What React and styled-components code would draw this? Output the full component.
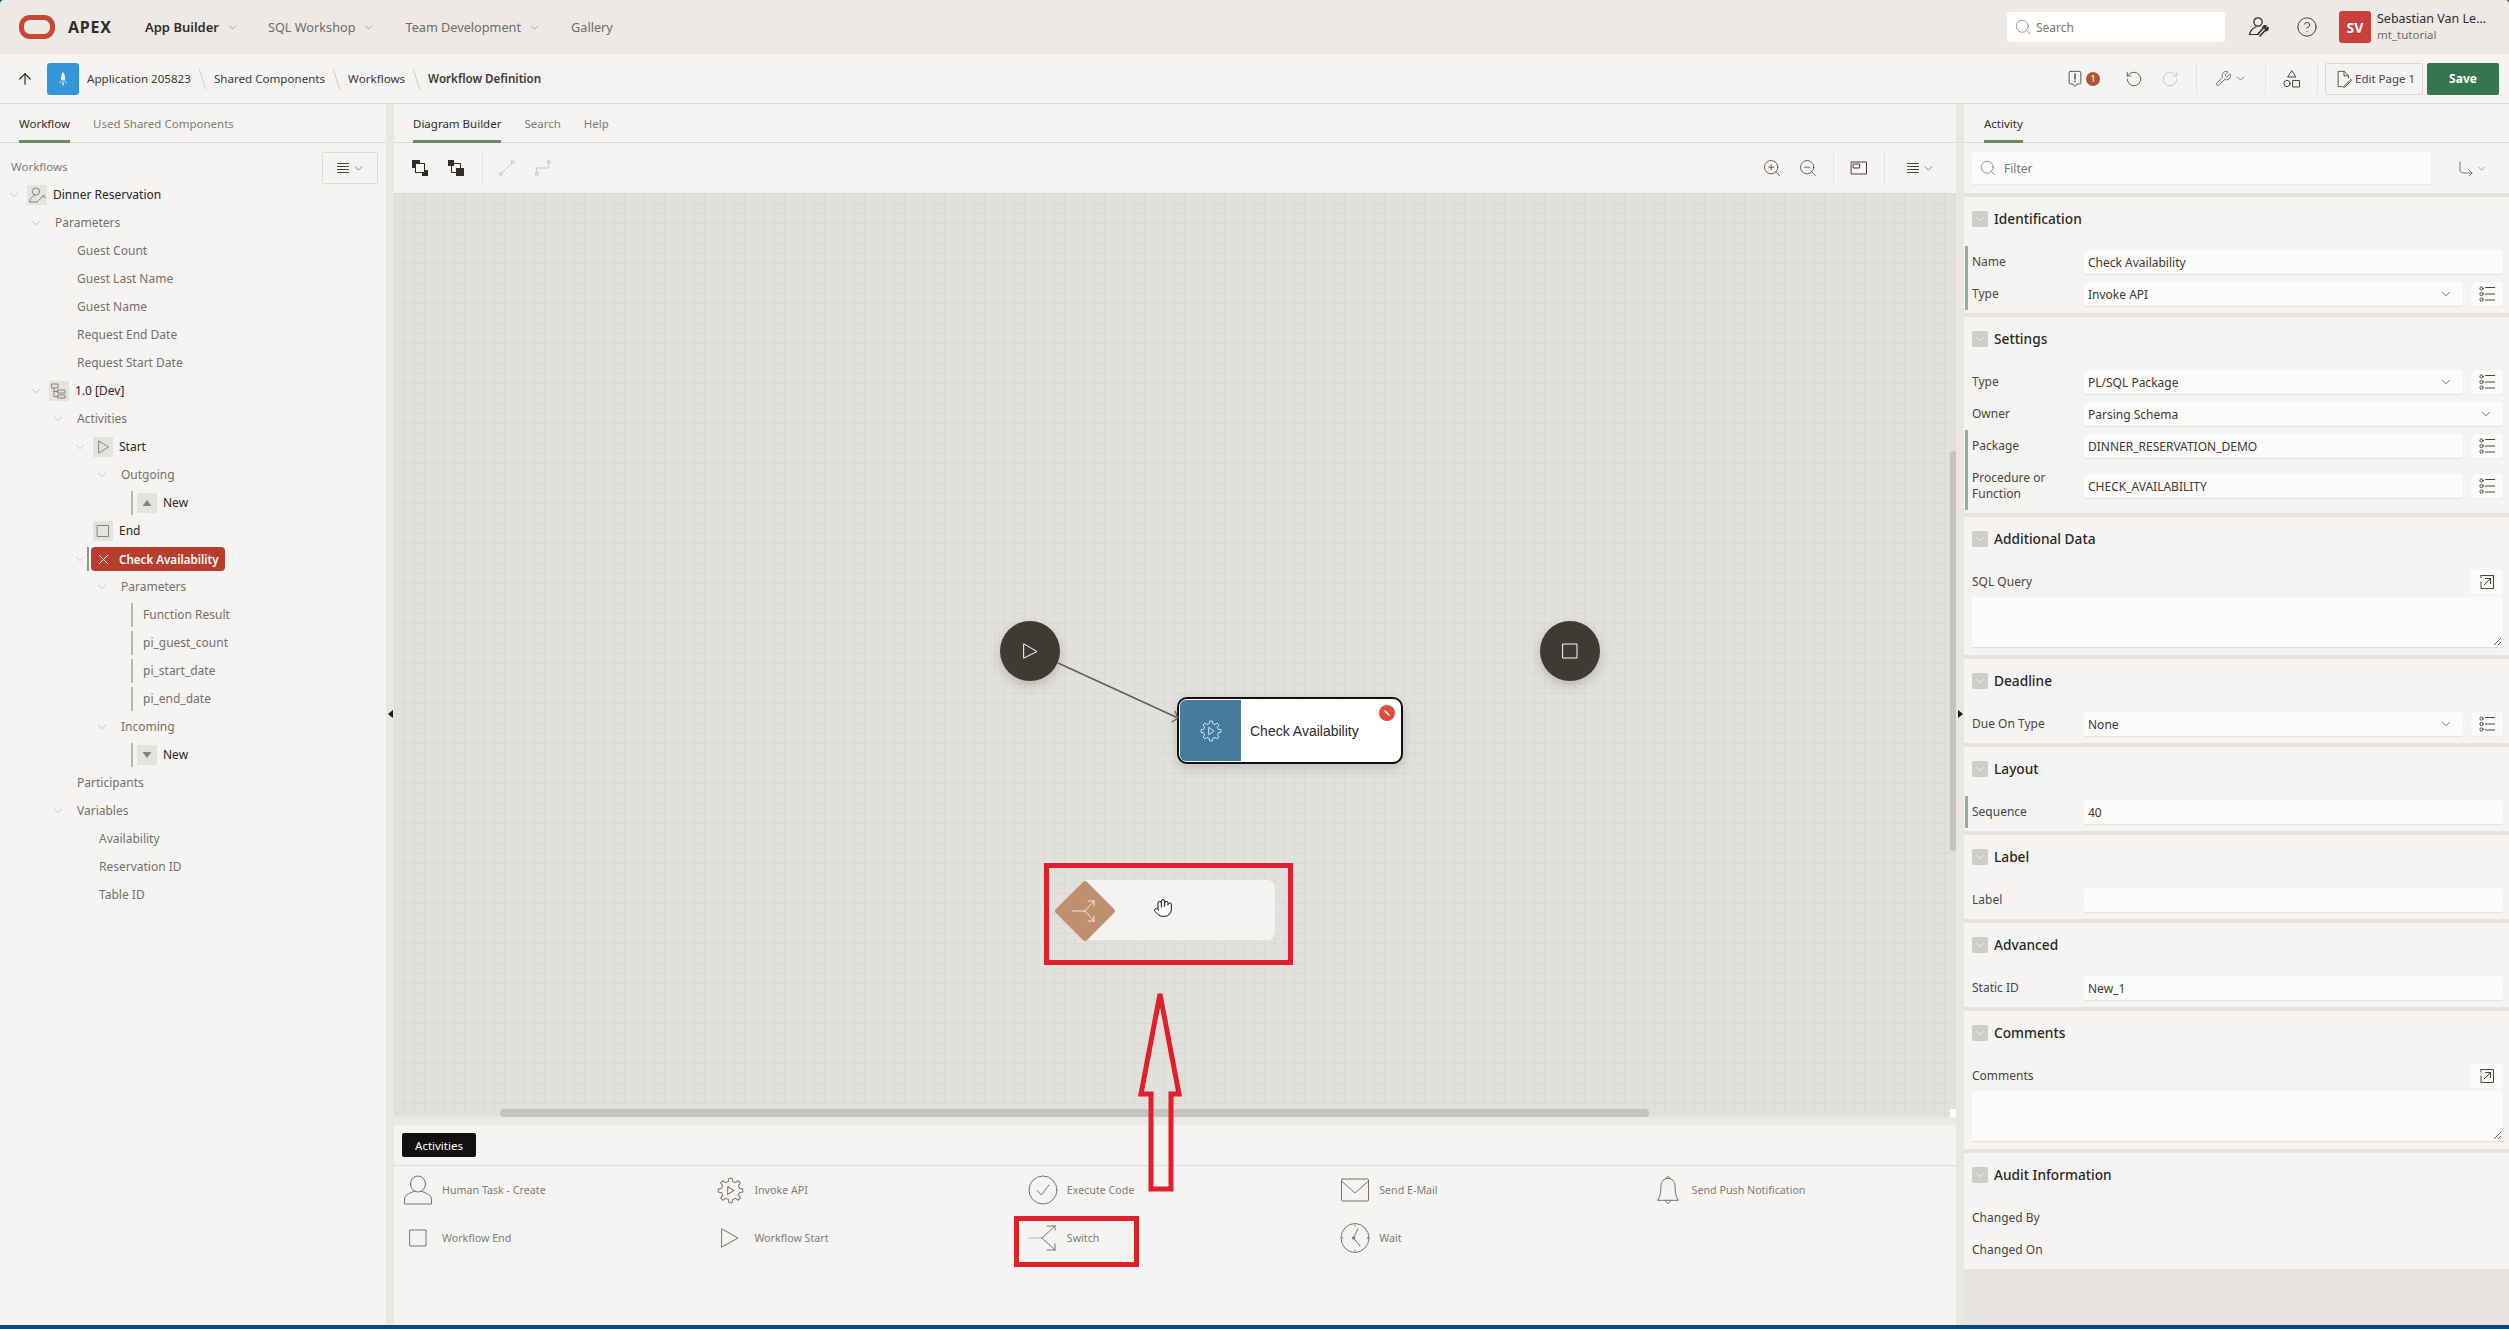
import React from "react";
import styled, { createGlobalStyle } from "styled-components";
import { ChevronDown, Search as SearchGlyph, CircleHelp, RotateCcw, RotateCw, Wrench, ZoomIn, ZoomOut, ArrowUp, X, Hand } from "lucide-react";

const Global = createGlobalStyle`
  html, body { margin: 0; padding: 0; background: #0c4a75; }
  body { font-family: "Noto Sans", "Open Sans", sans-serif; font-size: 12px; color: #312d2a; overflow: hidden; }
  * { box-sizing: border-box; }
`;

const Page = styled.div`
  position: relative;
  width: 2509px;
  height: 1329px;
  display: flex;
  flex-direction: column;
  background: #0c4a75;
  overflow: hidden;
`;
const TopBar = styled.header`
  height: 54px;
  display: flex;
  align-items: center;
  background: #ece9e6;
  border-radius: 4px 4px 0 0;
  padding-left: 19px;
  padding-right: 10px;
`;
const Logo = styled.div`
  width: 36px;
  height: 24px;
  border: 5px solid #c74634;
  border-radius: 11px;
`;
const Brand = styled.div`
  font-size: 16px;
  font-weight: 700;
  letter-spacing: 0.8px;
  margin-left: 13px;
  margin-right: 32px;
  width: 45px;
`;
const NavItem = styled.div`
  display: flex;
  align-items: center;
  gap: 7px;
  font-size: ${p => (p.$active ? 13 : 12.7)}px;
  font-weight: ${p => (p.$active ? 600 : 400)};
  color: ${p => (p.$active ? "#312d2a" : "#6f6b67")};
  margin-right: ${p => (p.$active ? 29 : 30)}px;
  svg { color: #8d8985; }
`;
const Spacer = styled.div`flex: 1;`;
const GlobalSearch = styled.div`
  width: 218px;
  height: 30px;
  background: #fff;
  border-radius: 3px;
  display: flex;
  align-items: center;
  gap: 4px;
  padding-left: 7px;
  color: #7a7672;
  font-size: 12px;
  margin-right: 22px;
`;
const TopIcon = styled.div`
  width: 24px;
  height: 24px;
  display: flex;
  align-items: center;
  justify-content: center;
  color: #312d2a;
  margin-right: ${p => p.$mr || 0}px;
`;
const Avatar = styled.div`
  width: 32px;
  height: 32px;
  background: #c9403a;
  color: #fff;
  font-weight: 700;
  font-size: 14px;
  border-radius: 3px;
  display: flex;
  align-items: center;
  justify-content: center;
  margin-right: 6px;
`;
const UserBlock = styled.div`
  display: flex;
  flex-direction: column;
  line-height: 16px;
  font-size: 12.5px;
  white-space: nowrap;
  width: 122px;
  span:last-child { color: #6f6b67; font-size: 11.5px; }
`;

const ToolBar = styled.div`
  height: 50px;
  display: flex;
  align-items: center;
  background: #f6f4f2;
  border-bottom: 1px solid #e0ddd9;
  padding: 0 10px 0 16px;
`;
const UpButton = styled.div`
  width: 18px;
  display: flex;
  margin-right: 13px;
  color: #312d2a;
`;
const AppIcon = styled.div`
  width: 32px;
  height: 32px;
  background: #3498d8;
  border-radius: 3px;
  display: flex;
  align-items: center;
  justify-content: center;
  margin-right: 8px;
`;
const Crumb = styled.div`
  font-size: 11.6px;
  white-space: nowrap;
  font-weight: ${p => (p.$current ? 600 : 400)};
  color: #3d3935;
`;
const CrumbSep = styled.div`
  width: 1px;
  height: 22px;
  background: #cfccc8;
  transform: rotate(-18deg);
  margin: 0 11px;
`;
const ToolIcon = styled.div`
  display: flex;
  align-items: center;
  justify-content: center;
  gap: 2px;
  width: ${p => p.$w || 36}px;
  flex: none;
  color: ${p => (p.$dim ? "#c3c0bc" : "#4a4642")};
`;
const ToolSep = styled.div`
  width: 1px;
  height: 32px;
  flex: none;
  background: #e6e3e0;
  margin: 0 ${p => p.$m ?? 6}px 0 ${p => p.$ml ?? p.$m ?? 6}px;
`;
const Badge = styled.div`
  width: 14px;
  height: 14px;
  border-radius: 50%;
  background: #b3562b;
  color: #fff;
  font-size: 9px;
  line-height: 14px;
  text-align: center;
`;
const HistoryGap = styled.div`
  width: 9px;
  flex: none;
`;
const EditButton = styled.div`
  width: 98px;
  height: 32px;
  border: 1px solid #dcd9d5;
  border-radius: 2px;
  display: flex;
  align-items: center;
  gap: 2px;
  padding-left: 9px;
  font-size: 11.5px;
  color: #4a4642;
  margin-right: 4px;
`;
const SaveButton = styled.div`
  width: 72px;
  height: 32px;
  background: #34774f;
  color: #fff;
  border-radius: 2px;
  font-weight: 700;
  font-size: 12px;
  display: flex;
  align-items: center;
  justify-content: center;
`;

const Main = styled.div`
  height: 1221px;
  display: grid;
  grid-template-columns: 386px 8px 1562px 8px 545px;
  background: #e9e7e4;
`;
const Panel = styled.section`
  background: #f6f4f2;
  display: flex;
  flex-direction: column;
  min-height: 0;
`;
const Gutter = styled.div`
  background: #e9e7e4;
  display: flex;
  align-items: flex-start;
  justify-content: center;
  padding-top: 606px;
  svg { display: block; }
`;
const TabRow = styled.div`
  height: 39px;
  flex: none;
  display: flex;
  gap: 23px;
  padding-left: ${p => p.$pl || 19}px;
  border-bottom: 1px solid #dfdcd8;
`;
const Tab = styled.div`
  height: 39px;
  display: flex;
  align-items: center;
  font-size: 11.5px;
  color: ${p => (p.$on ? "#312d2a" : "#807c78")};
  border-bottom: 3px solid ${p => (p.$on ? "#6c8a62" : "transparent")};
  padding-top: 3px;
`;
const TreeHead = styled.div`
  height: 38px;
  flex: none;
  display: flex;
  justify-content: space-between;
  align-items: flex-start;
  padding: 9px 8px 0 11px;
  color: #807c78;
  font-size: 11.5px;
  line-height: 30px;
`;
const MenuButton = styled.div`
  width: 56px;
  height: 32px;
  border: 1px solid #dedbd7;
  border-radius: 2px;
  background: #f6f4f2;
  display: flex;
  align-items: center;
  justify-content: center;
  gap: 2px;
  color: #4a4642;
`;
const TreeRow = styled.div`
  height: 28px;
  display: flex;
  align-items: center;
  flex: none;
  padding-left: ${p => 3 + 22 * p.$d}px;
`;
const TreeSlot = styled.div`
  width: 22px;
  height: 24px;
  flex: none;
  display: flex;
  align-items: center;
  padding-left: 4px;
`;
const Twist = styled.div`
  width: 14px;
  flex: none;
  display: flex;
  justify-content: center;
  color: #b5b2ae;
`;
const ReqBar = styled.div`
  width: 2px;
  height: 24px;
  background: ${p => (p.$strong ? "#7f9f85" : "#a9bfa9")};
  flex: none;
`;
const NodeIcon = styled.div`
  width: 20px;
  height: 20px;
  margin-left: 2px;
  margin-right: 6px;
  flex: none;
  background: ${p => (p.$plain ? "transparent" : "#e5e3e0")};
  display: flex;
  align-items: center;
  justify-content: center;
  color: ${p => (p.$plain ? "#fff" : "#86827e")};
`;
const TreeText = styled.div`
  font-size: 12px;
  white-space: nowrap;
  color: ${p => (p.$dark ? "#2a2724" : "#74706c")};
  padding-left: ${p => (p.$dark ? 0 : 8)}px;
  padding-bottom: 1px;
`;
const Pill = styled.div`
  width: 134px;
  height: 24px;
  display: flex;
  align-items: center;
  background: #b93d2c;
  border-radius: 4px;
  color: #fff;
  font-weight: 600;
  font-size: 11.6px;
  white-space: nowrap;
`;

const CenterTools = styled.div`
  height: 50px;
  flex: none;
  display: flex;
  align-items: center;
  padding: 0 8px 0 8px;
`;
const Canvas = styled.div`
  position: relative;
  height: 924px;
  flex: none;
  background-color: #e2e1dd;
  background-image:
    linear-gradient(to right, #dbdad6 1px, transparent 1px),
    linear-gradient(to bottom, #dbdad6 1px, transparent 1px);
  background-size: 10px 10px;
  overflow: hidden;
`;
const ScrollH = styled.div`
  position: absolute;
  left: 106px;
  bottom: 0;
  width: 1149px;
  height: 8px;
  background: #c4c3bf;
  border-radius: 4px;
`;
const ScrollV = styled.div`
  position: absolute;
  right: 0;
  top: 258px;
  width: 6px;
  height: 400px;
  background: #c4c3bf;
  border-radius: 3px;
`;
const ScrollCorner = styled.div`
  position: absolute;
  right: 0;
  bottom: 0;
  width: 6px;
  height: 8px;
  background: #fff;
`;
const RoundNode = styled.div`
  position: absolute;
  left: ${p => p.$x}px;
  top: ${p => p.$y}px;
  width: 60px;
  height: 60px;
  border-radius: 50%;
  background: #3f3a34;
  box-shadow: 0 4px 12px rgba(0, 0, 0, 0.18);
  display: flex;
  align-items: center;
  justify-content: center;
`;
const ActivityNode = styled.div`
  position: absolute;
  left: 783px;
  top: 504px;
  width: 226px;
  height: 67px;
  border: 2px solid #111;
  border-radius: 10px;
  background: #fff;
  box-shadow: 0 4px 12px rgba(0, 0, 0, 0.15);
  padding: 1px;
  display: flex;
  align-items: stretch;
`;
const NodeBlue = styled.div`
  width: 61px;
  background: #467b9b;
  border-radius: 6px 0 0 6px;
  display: flex;
  align-items: center;
  justify-content: center;
`;
const NodeLabel = styled.div`
  font-family: "Liberation Sans", Arial, sans-serif;
  font-size: 14px;
  color: #2b2b2b;
  align-self: center;
  padding-left: 9px;
`;
const ErrorDot = styled.div`
  position: absolute;
  right: 6px;
  top: 6px;
  width: 16px;
  height: 16px;
  border-radius: 50%;
  background: #e14b3c;
  display: flex;
  align-items: center;
  justify-content: center;
`;
const GhostNode = styled.div`
  position: absolute;
  left: 685px;
  top: 687px;
  width: 196px;
  height: 60px;
  background: #f5f3f1;
  border-radius: 8px;
`;
const Diamond = styled.div`
  position: absolute;
  left: 669px;
  top: 696px;
  width: 44px;
  height: 44px;
  transform: rotate(45deg);
  background: #bf8f6f;
  border-radius: 3px;
`;
const DiamondIcon = styled.div`
  position: absolute;
  left: 671px;
  top: 698px;
  display: flex;
`;
const Cursor = styled.div`
  position: absolute;
  left: 759px;
  top: 705px;
  display: flex;
  color: #111;
`;
const Connector = styled.svg`
  position: absolute;
  left: 0;
  top: 0;
  width: 100%;
  height: 100%;
  pointer-events: none;
`;
const SplitBar = styled.div`
  height: 8px;
  flex: none;
  background: #ebe9e6;
`;
const PaletteHead = styled.div`
  height: 41px;
  flex: none;
  padding: 8px 8px 0;
  border-bottom: 1px solid #e0ddd9;
`;
const PaletteTab = styled.div`
  width: 74px;
  height: 24px;
  background: #111;
  color: #fff;
  font-size: 11.5px;
  border-radius: 2px;
  display: flex;
  align-items: center;
  justify-content: center;
`;
const PaletteGrid = styled.div`
  display: grid;
  grid-template-columns: repeat(5, 1fr);
  grid-auto-rows: 48px;
`;
const PaletteItem = styled.div`
  display: flex;
  align-items: center;
  padding-left: 8px;
  gap: 8px;
  color: #807c78;
  font-size: 10.7px;
  white-space: nowrap;
`;
const PaletteIcon = styled.div`
  width: 32px;
  height: 36px;
  display: flex;
  align-items: center;
  justify-content: center;
  flex: none;
  color: #77736f;
`;

const FilterRow = styled.div`
  height: 50px;
  flex: none;
  display: flex;
  align-items: center;
  padding-left: 8px;
`;
const FilterInput = styled.div`
  width: 459px;
  height: 32px;
  background: #fcfbfa;
  box-shadow: 0 1px 2px rgba(0, 0, 0, 0.06);
  display: flex;
  align-items: center;
  gap: 7px;
  padding-left: 7px;
  color: #7a7672;
  font-size: 12px;
  border-radius: 2px;
`;
const RouteButton = styled.div`
  margin-left: 27px;
  display: flex;
  align-items: center;
  gap: 1px;
  color: #77736f;
`;
const Sections = styled.div`
  flex: 1;
  display: flex;
  flex-direction: column;
  gap: 4px;
  background: #e6e3e0;
  border-top: 4px solid #e4e2df;
`;
const Section = styled.div`
  background: #f5f4f3;
  padding-bottom: ${p => p.$pb || 3}px;
`;
const SectionHead = styled.div`
  height: 49px;
  padding: 14px 0 0 8px;
  display: flex;
  align-items: flex-start;
  gap: 6px;
  font-size: 13.7px;
  font-weight: 500;
  line-height: 16px;
  color: #2a2724;
`;
const Toggle = styled.div`
  width: 16px;
  height: 16px;
  background: #cfcdc9;
  border-radius: 2px;
  display: flex;
  align-items: center;
  justify-content: center;
  color: #f4f3f1;
  svg { display: block; }
`;
const Row = styled.div`
  display: grid;
  grid-template-columns: 116px 1fr;
  align-items: center;
  height: ${p => p.$h || 32}px;
  margin-left: 1px;
  border-left: 3px solid ${p => (p.$req ? "#8fb09a" : "transparent")};
`;
const Label = styled.div`
  padding-left: 4px;
  font-size: 12px;
  line-height: 16px;
  color: #4a4642;
`;
const Field = styled.div`
  display: flex;
  gap: 8px;
  padding-right: 6px;
  align-items: center;
`;
const Input = styled.div`
  flex: 1;
  height: 24px;
  background: #fcfbfa;
  box-shadow: 0 1px 1px rgba(0, 0, 0, 0.08);
  border-radius: 2px;
  display: flex;
  align-items: center;
  justify-content: space-between;
  padding: 0 10px 0 4px;
  font-size: 12px;
  color: #3d3935;
`;
const ListButton = styled.div`
  width: 32px;
  height: 24px;
  background: #fcfbfa;
  box-shadow: 0 0 1px rgba(0, 0, 0, 0.2);
  border-radius: 2px;
  display: flex;
  align-items: center;
  justify-content: center;
  color: #4a4642;
`;
const LabelRow = styled.div`
  height: 31px;
  display: flex;
  align-items: center;
  justify-content: space-between;
  padding-right: 6px;
  margin-left: 4px;
`;
const ExpandButton = styled.div`
  width: 32px;
  height: 24px;
  background: #fcfbfa;
  display: flex;
  align-items: center;
  justify-content: center;
  color: #4a4642;
`;
const TextArea = styled.div`
  position: relative;
  height: 50px;
  margin: 0 6px 5px 8px;
  background: #fcfbfa;
  box-shadow: 0 1px 1px rgba(0, 0, 0, 0.08);
`;
const Grip = styled.svg`
  position: absolute;
  right: 1px;
  bottom: 1px;
`;
const Rest = styled.div`flex: 1;`;
const Annotation = styled.svg`
  position: absolute;
  left: 0;
  top: 0;
  width: 2509px;
  height: 1329px;
  pointer-events: none;
`;

const Ic = ({ s = 20, w = 1, vb, children, c = "currentColor" }) => (
  <svg width={s} height={s} viewBox={vb || `0 0 ${s} ${s}`} fill="none" stroke={c} strokeWidth={w} strokeLinecap="round" strokeLinejoin="round">
    {children}
  </svg>
);
const Chev = ({ s = 13, c, w = 1.2 }) => <ChevronDown size={s} strokeWidth={w} color={c || "currentColor"} />;

function gearPath(cx, cy, R, r, n) {
  const pts = [];
  for (let i = 0; i < n; i++) {
    const a = (i / n) * Math.PI * 2;
    const d = (Math.PI * 2) / n;
    [[-0.3, r], [-0.16, R], [0.16, R], [0.3, r]].forEach(([o, q]) => {
      pts.push(`${(cx + q * Math.cos(a + o * d)).toFixed(2)} ${(cy + q * Math.sin(a + o * d)).toFixed(2)}`);
    });
  }
  return "M" + pts.join("L") + "Z";
}
const GearPlay = ({ c = "currentColor" }) => (
  <Ic s={24} c={c}>
    <path d={gearPath(12, 12, 10, 7.6, 8)} />
    <path d="M10 8.5L15 12L10 15.5Z" />
  </Ic>
);
const Hamburger = () => (
  <Ic s={14}>
    <path d="M1.5 2.5H12.5M1.5 5.5H12.5M1.5 8.5H12.5M1.5 11.5H12.5" />
  </Ic>
);
const ListIcon = () => (
  <Ic s={18}>
    <circle cx="3.5" cy="3.5" r="1.6" /><circle cx="3.5" cy="9" r="1.6" /><circle cx="3.5" cy="14.5" r="1.6" />
    <path d="M7.5 2.5H16.5M7.5 9H16.5M7.5 15H16.5" />
  </Ic>
);
const Expand = () => (
  <Ic s={16}>
    <path d="M2 1.5H14.5V14.5H2V8M2 1.5V4" />
    <path d="M5 11L11.5 4.5M6.5 4.5H11.5V9.5" />
  </Ic>
);
const PersonWrench = () => (
  <Ic s={22} w={1.2}>
    <circle cx="10" cy="6" r="4.2" />
    <path d="M8 11C5 12 2.5 14.5 1.5 18.5H10.5" />
    <path d="M9.5 18.5L15 12.5C14.5 10.5 16 9.5 18 10L16.5 12L18 13L20 11.5C20.5 13.5 19 15 17 14.5L12 20" strokeWidth="1.6" />
  </Ic>
);
const ArrangeFront = () => (
  <svg width="16" height="16" viewBox="0 0 16 16">
    <rect x="0" y="0" width="8" height="8" fill="#2f2c29" />
    <rect x="10" y="10" width="6" height="6" fill="#2f2c29" />
    <rect x="3.5" y="3.5" width="9" height="9" fill="#fbfaf9" stroke="#2f2c29" />
  </svg>
);
const ArrangeBack = () => (
  <svg width="16" height="16" viewBox="0 0 16 16">
    <rect x="0" y="0" width="6" height="6" fill="#2f2c29" />
    <rect x="8" y="8" width="8" height="8" fill="#2f2c29" />
    <path d="M6 3.5H12.5V8M8 12.5H3.5V6" fill="none" stroke="#2f2c29" />
  </svg>
);

const treeData = [
  { d: 0, tw: 1, t: "Dinner Reservation", icon: "person" },
  { d: 1, tw: 1, t: "Parameters" },
  { d: 2, t: "Guest Count" }, { d: 2, t: "Guest Last Name" }, { d: 2, t: "Guest Name" },
  { d: 2, t: "Request End Date" }, { d: 2, t: "Request Start Date" },
  { d: 1, tw: 1, t: "1.0 [Dev]", icon: "version" },
  { d: 2, tw: 1, t: "Activities" },
  { d: 3, tw: 1, t: "Start", icon: "start" },
  { d: 4, tw: 1, t: "Outgoing" },
  { d: 5, bar: 1, t: "New", icon: "up" },
  { d: 3, t: "End", icon: "end" },
  { d: 3, tw: 1, bar: 2, t: "Check Availability", pill: 1 },
  { d: 4, tw: 1, t: "Parameters" },
  { d: 5, bar: 1, t: "Function Result" }, { d: 5, bar: 1, t: "pi_guest_count" },
  { d: 5, bar: 1, t: "pi_start_date" }, { d: 5, bar: 1, t: "pi_end_date" },
  { d: 4, tw: 1, t: "Incoming" },
  { d: 5, bar: 1, t: "New", icon: "down" },
  { d: 2, t: "Participants" },
  { d: 2, tw: 1, t: "Variables" },
  { d: 3, t: "Availability" }, { d: 3, t: "Reservation ID" }, { d: 3, t: "Table ID" },
];

const TreeGlyph = ({ k }) => {
  if (k === "person") return <Ic s={18}><circle cx="8" cy="5.5" r="3.6" /><path d="M6.5 9.5C4 10.5 2 12.5 1.5 16H9M9 16L14 11C14 9.5 15 9 16.5 9.5L15.5 11L16.5 12L17.5 11" /></Ic>;
  if (k === "version") return <Ic s={18}><rect x="2" y="2" width="6" height="4" /><rect x="8" y="8" width="7" height="3" /><rect x="8" y="13" width="7" height="3" /><path d="M4 6V14.5H8M4 9.5H8" /></Ic>;
  if (k === "start") return <Ic s={18}><path d="M5 3L14.5 9L5 15Z" /></Ic>;
  if (k === "end") return <Ic s={14}><rect x="1.5" y="1.5" width="11" height="11" /></Ic>;
  if (k === "up") return <svg width="10" height="8"><path d="M5 1L9.5 7H.5Z" fill="currentColor" /></svg>;
  return <svg width="10" height="8"><path d="M5 7L9.5 1H.5Z" fill="currentColor" /></svg>;
};

const TreeItem = ({ n }) => (
  <TreeRow $d={n.d}>
    <TreeSlot>
      <Twist>{n.tw ? <Chev s={14} /> : null}</Twist>
      {n.bar ? <ReqBar $strong={n.bar === 2} /> : null}
    </TreeSlot>
    {n.pill ? (
      <Pill>
        <NodeIcon $plain><X size={17} strokeWidth={1.3} /></NodeIcon>
        {n.t}
      </Pill>
    ) : n.icon ? (
      <>
        <NodeIcon><TreeGlyph k={n.icon} /></NodeIcon>
        <TreeText $dark>{n.t}</TreeText>
      </>
    ) : (
      <TreeText>{n.t}</TreeText>
    )}
  </TreeRow>
);

const FormRow = ({ label, value, req, select, list, h }) => (
  <Row $req={req} $h={h}>
    <Label>{label}</Label>
    <Field>
      <Input>
        <span>{value}</span>
        {select ? <Chev s={14} /> : null}
      </Input>
      {list ? <ListButton><ListIcon /></ListButton> : null}
    </Field>
  </Row>
);
const PlainRow = ({ label }) => <Row><Label>{label}</Label><span /></Row>;
const Head = ({ children }) => (
  <SectionHead><Toggle><Chev s={14} w={1.6} /></Toggle>{children}</SectionHead>
);
const AreaBlock = ({ label }) => (
  <>
    <LabelRow>
      <Label>{label}</Label>
      <ExpandButton><Expand /></ExpandButton>
    </LabelRow>
    <TextArea>
      <Grip width="9" height="9" viewBox="0 0 9 9" stroke="#5f5b57" strokeWidth="1"><path d="M1 8L8 1M5 8L8 5" /></Grip>
    </TextArea>
  </>
);

const palette = [
  ["Human Task - Create", <Ic s={30}><ellipse cx="15" cy="9" rx="7.5" ry="8" /><path d="M12 16C8 18 2 19 1.5 24V29H28.5V24C28 19 22 18 18 16" /></Ic>],
  ["Invoke API", <Ic s={27} vb="0 0 24 24" w={0.9}><path d={gearPath(12, 12, 11, 8.2, 8)} /><path d="M9.5 8.5L15 12L9.5 15.5Z" /></Ic>],
  ["Execute Code", <Ic s={30}><circle cx="15" cy="15" r="14" /><path d="M9 15.5L13.5 20L21 10" /></Ic>],
  ["Send E-Mail", <Ic s={30}><rect x="1.5" y="4" width="27" height="22" rx="1" stroke="#77726a" /><path d="M1.5 6L15 18L28.5 6" /></Ic>],
  ["Send Push Notification", <Ic s={30}><path d="M5 25C7.5 21 8 16 8 11C8 6 11 3.5 15 3.5C19 3.5 22 6 22 11C22 16 22.5 21 25 25Z" /><path d="M13 3.5C13 1 17 1 17 3.5M12.5 25C13 29.5 17 29.5 17.5 25" /></Ic>],
  ["Workflow End", <Ic s={18}><rect x="1" y="1" width="16" height="16" /></Ic>],
  ["Workflow Start", <Ic s={30}><path d="M7 6L23 15L7 24Z" /></Ic>],
  ["Switch", <Ic s={30}><path d="M1 15H14" stroke="#b5b2ae" /><path d="M14 15L27 3M27 3H19M27 3V7M14 15L27 27M27 27H19M27 27V21" /></Ic>],
  ["Wait", <Ic s={30}><ellipse cx="15" cy="15" rx="14" ry="14.5" /><path d="M13.5 15L18 6M13.5 15L20 23" /><circle cx="13.5" cy="15" r="1.2" /><path d="M15 2V3M15 27V28M2 15H3M27 15H28" /></Ic>],
];

export default function App() {
  return (
    <Page>
      <Global />
      <TopBar>
        <Logo />
        <Brand>APEX</Brand>
        <NavItem $active>App Builder <Chev /></NavItem>
        <NavItem>SQL Workshop <Chev /></NavItem>
        <NavItem>Team Development <Chev /></NavItem>
        <NavItem>Gallery</NavItem>
        <Spacer />
        <GlobalSearch><SearchGlyph size={18} strokeWidth={1} />Search</GlobalSearch>
        <TopIcon $mr={24}><PersonWrench /></TopIcon>
        <TopIcon $mr={20}><CircleHelp size={22} strokeWidth={1} /></TopIcon>
        <Avatar>SV</Avatar>
        <UserBlock><span>Sebastian Van Le...</span><span>mt_tutorial</span></UserBlock>
      </TopBar>
      <ToolBar>
        <UpButton><ArrowUp size={18} strokeWidth={1.6} /></UpButton>
        <AppIcon>
          <svg width="10" height="16" viewBox="0 0 14 22" fill="#e8eef2"><path d="M7 1C9.5 4 10 8 10 13H4C4 8 4.5 4 7 1Z" /><path d="M3.5 13L1.5 17L4 16ZM10.5 13L12.5 17L10 16ZM6 15H8V20H6Z" /></svg>
        </AppIcon>
        <Crumb>Application 205823</Crumb><CrumbSep />
        <Crumb>Shared Components</Crumb><CrumbSep />
        <Crumb>Workflows</Crumb><CrumbSep />
        <Crumb $current>Workflow Definition</Crumb>
        <Spacer />
        <ToolIcon $w={48}>
          <Ic s={18} vb="0 0 16 20"><path d="M3 1.5H13C14 1.5 14.5 2 14.5 3V14C14.5 15 14 15.5 13 15.5H10.5L8 18.5L5.5 15.5H3C2 15.5 1.5 15 1.5 14V3C1.5 2 2 1.5 3 1.5Z" /><path d="M8 4.5V10M8 12.5V13" strokeWidth="1.6" /></Ic>
          <Badge>1</Badge>
        </ToolIcon>
        <HistoryGap />
        <ToolIcon $w={36}><RotateCcw size={18} strokeWidth={1.1} /></ToolIcon>
        <ToolIcon $w={36} $dim><RotateCw size={18} strokeWidth={1.1} /></ToolIcon>
        <ToolSep $m={8} />
        <ToolIcon $w={52}><Wrench size={17} strokeWidth={1} /><Chev /></ToolIcon>
        <ToolSep $m={8} />
        <ToolIcon $w={36}>
          <Ic s={20}><path d="M10 2L14 8H6Z" /><circle cx="5" cy="14.5" r="3.2" /><rect x="11" y="11.5" width="6.5" height="6.5" /></Ic>
        </ToolIcon>
        <ToolSep $m={7} />
        <EditButton>
          <Ic s={18} vb="0 0 18 20"><path d="M9 1.5H2.5V18.5H7M9 1.5L14 6.5V9M9 1.5V6.5H14" /><path d="M9 18L16.5 10.5L17.5 11.5L10 19H8.5Z" /></Ic>
          Edit Page 1
        </EditButton>
        <SaveButton>Save</SaveButton>
      </ToolBar>
      <Main>
        <Panel>
          <TabRow>
            <Tab $on>Workflow</Tab>
            <Tab>Used Shared Components</Tab>
          </TabRow>
          <TreeHead>
            <span>Workflows</span>
            <MenuButton><Hamburger /><Chev /></MenuButton>
          </TreeHead>
          {treeData.map((n, i) => <TreeItem key={i} n={n} />)}
        </Panel>
        <Gutter>
          <svg width="5" height="8"><path d="M0 4L5 0V8Z" fill="#1d1b19" /></svg>
        </Gutter>
        <Panel>
          <TabRow>
            <Tab $on>Diagram Builder</Tab>
            <Tab>Search</Tab>
            <Tab>Help</Tab>
          </TabRow>
          <CenterTools>
            <ToolIcon $w={36}><ArrangeFront /></ToolIcon>
            <ToolIcon $w={36}><ArrangeBack /></ToolIcon>
            <ToolSep $m={0} $ml={8} />
            <ToolIcon $w={48} $dim>
              <Ic s={16} vb="0 0 18 18"><rect x="1" y="14.5" width="2.5" height="2.5" /><rect x="14.5" y="1" width="2.5" height="2.5" /><path d="M3.5 14.5L14.5 3.5" /></Ic>
            </ToolIcon>
            <ToolIcon $w={24} $dim>
              <Ic s={16} vb="0 0 18 18"><rect x="1" y="14.5" width="2.5" height="2.5" /><rect x="14.5" y="1" width="2.5" height="2.5" /><path d="M2 14.5V9H15.5V3.5" /></Ic>
            </ToolIcon>
            <Spacer />
            <ToolIcon $w={36}><ZoomIn size={20} strokeWidth={1} /></ToolIcon>
            <ToolIcon $w={36}><ZoomOut size={20} strokeWidth={1} /></ToolIcon>
            <ToolSep $m={7} />
            <ToolIcon $w={36}>
              <Ic s={18}><rect x="1.5" y="3" width="15" height="12" stroke="#4f3f4a" /><rect x="3.5" y="5" width="6" height="4" stroke="#4f3f4a" /></Ic>
            </ToolIcon>
            <ToolSep $m={7} />
            <ToolIcon $w={56}><Hamburger /><Chev /></ToolIcon>
          </CenterTools>
          <Canvas>
            <RoundNode $x={606} $y={428}>
              <Ic s={20} c="#fff"><path d="M4 3L17 10.5L4 17Z" /></Ic>
            </RoundNode>
            <RoundNode $x={1146} $y={428}>
              <Ic s={18} c="#fff"><rect x="2" y="2" width="14" height="14" /></Ic>
            </RoundNode>
            <ActivityNode>
              <NodeBlue><GearPlay c="#cfe6f2" /></NodeBlue>
              <NodeLabel>Check Availability</NodeLabel>
              <ErrorDot><Ic s={10} c="#fff" w={1.6}><path d="M3 3L7 7" /></Ic></ErrorDot>
            </ActivityNode>
            <Connector>
              <path d="M664 470L784 525" stroke="#5f5d59" strokeWidth="1.5" />
              <path d="M778 529L784 525L781 518" stroke="#5f5d59" strokeWidth="1.2" fill="none" />
            </Connector>
            <GhostNode />
            <Diamond />
            <DiamondIcon>
              <Ic s={40} c="#f6e6da"><path d="M7 20H20M20 20L29 10M29 10H23M29 10V15M20 20L29 30M29 30H23M29 30V25" /></Ic>
            </DiamondIcon>
            <Cursor><Hand size={20} strokeWidth={1.2} fill="#fff" /></Cursor>
            <ScrollH />
            <ScrollV />
            <ScrollCorner />
          </Canvas>
          <SplitBar />
          <PaletteHead><PaletteTab>Activities</PaletteTab></PaletteHead>
          <PaletteGrid>
            {palette.map(([t, icon]) => (
              <PaletteItem key={t}><PaletteIcon>{icon}</PaletteIcon>{t}</PaletteItem>
            ))}
          </PaletteGrid>
        </Panel>
        <Gutter>
          <svg width="5" height="8"><path d="M5 4L0 0V8Z" fill="#1d1b19" /></svg>
        </Gutter>
        <Panel>
          <TabRow $pl={20}><Tab $on>Activity</Tab></TabRow>
          <FilterRow>
            <FilterInput><SearchGlyph size={18} strokeWidth={1} />Filter</FilterInput>
            <RouteButton>
              <Ic s={16}><path d="M2 2V9C2 12 3 13 6 13H14M11 10L14 13L11 16" /></Ic>
              <Chev />
            </RouteButton>
          </FilterRow>
          <Sections>
            <Section>
              <Head>Identification</Head>
              <FormRow req label="Name" value="Check Availability" />
              <FormRow req label="Type" value="Invoke API" select list />
            </Section>
            <Section>
              <Head>Settings</Head>
              <FormRow label="Type" value="PL/SQL Package" select list />
              <FormRow label="Owner" value="Parsing Schema" select />
              <FormRow req label="Package" value="DINNER_RESERVATION_DEMO" list />
              <FormRow req h={48} label={<>Procedure or<br />Function</>} value="CHECK_AVAILABILITY" list />
            </Section>
            <Section>
              <Head>Additional Data</Head>
              <AreaBlock label="SQL Query" />
            </Section>
            <Section>
              <Head>Deadline</Head>
              <FormRow label="Due On Type" value="None" select list />
            </Section>
            <Section>
              <Head>Layout</Head>
              <FormRow req label="Sequence" value="40" />
            </Section>
            <Section>
              <Head>Label</Head>
              <FormRow label="Label" value="" />
            </Section>
            <Section>
              <Head>Advanced</Head>
              <FormRow label="Static ID" value="New_1" />
            </Section>
            <Section>
              <Head>Comments</Head>
              <AreaBlock label="Comments" />
            </Section>
            <Section>
              <Head>Audit Information</Head>
              <PlainRow label="Changed By" />
              <PlainRow label="Changed On" />
            </Section>
            <Rest />
          </Sections>
        </Panel>
      </Main>
      <Annotation viewBox="0 0 2509 1329" fill="none" stroke="#e0202c" strokeWidth="5">
        <rect x="1046.5" y="865.5" width="244" height="97" />
        <rect x="1016.5" y="1218.5" width="120" height="46" />
        <path d="M1160 994L1179 1094H1171V1189H1151V1094H1141Z" strokeLinejoin="miter" />
      </Annotation>
    </Page>
  );
}
